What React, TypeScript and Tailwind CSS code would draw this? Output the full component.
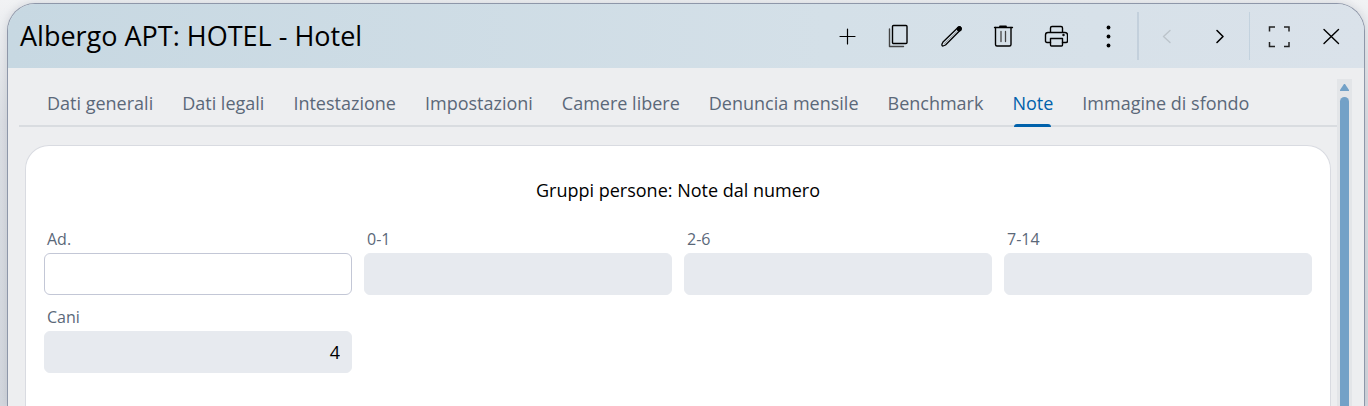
import { useState } from "react";
import type { ReactNode } from "react";

const tabs = [
  "Dati generali",
  "Dati legali",
  "Intestazione",
  "Impostazioni",
  "Camere libere",
  "Denuncia mensile",
  "Benchmark",
  "Note",
  "Immagine di sfondo",
];

const fields = [
  { id: "adults", label: "Ad.", value: "", enabled: true },
  { id: "age-0-1", label: "0-1", value: "", enabled: false },
  { id: "age-2-6", label: "2-6", value: "", enabled: false },
  { id: "age-7-14", label: "7-14", value: "", enabled: false },
  { id: "dogs", label: "Cani", value: "4", enabled: false },
];

type IconButtonProps = {
  label: string;
  disabled?: boolean;
  children: ReactNode;
};

const IconButton = ({ label, disabled, children }: IconButtonProps) => (
  <button
    aria-label={label}
    disabled={disabled}
    className="flex h-10 w-6 shrink-0 items-center justify-center text-black disabled:text-[#bcc4cb]"
  >
    <svg
      width="24"
      height="24"
      viewBox="0 0 24 24"
      fill="none"
      stroke="currentColor"
      strokeWidth="1.4"
      strokeLinecap="round"
      strokeLinejoin="round"
      className="shrink-0"
    >
      {children}
    </svg>
  </button>
);

const Toolbar = () => (
  <div className="flex items-center">
    <div className="flex gap-7 pr-[17px]">
      <IconButton label="Nuovo">
        <path d="M11.5 5v15M4 12.5h15" strokeWidth="1.2" />
      </IconButton>
      <IconButton label="Duplica">
        <rect x="4.5" y="1.5" width="14.5" height="18" rx="1" />
        <path d="M1.5 5v17.5h14" stroke="#444" />
      </IconButton>
      <IconButton label="Modifica">
        <path
          d="M2 20 3 18 18 3.5q1.500-1.300 2.600-.2t-.2 2.700L5.500 21 3 22Q1.500 22 2 20Z"
          strokeWidth="1.3"
        />
        <path d="M4.500 19.500 18 6.500" stroke="#777" strokeWidth=".7" />
        <circle cx="19.300" cy="4.800" r="1.900" fill="currentColor" />
      </IconButton>
      <IconButton label="Elimina">
        <path d="M3.500 3.500v17q0 1.500 1.500 1.500h12.500q1.500 0 1.500-1.500v-17" />
        <path d="M2.500 3.500h18" strokeWidth="1.300" />
        <path d="M8 2.500h6" strokeWidth="1.800" />
        <path d="M9 7.500v10M13.500 7.500v10" stroke="#444" strokeWidth="1.300" />
      </IconButton>
      <IconButton label="Stampa">
        <path d="M6.500 8V4q0-1.500 1.500-1.500h9Q18.500 2.500 18.500 4v4" />
        <path d="M6.500 18.500H3q-1.500 0-1.500-1.500v-6Q1.500 8.500 4 8.500h17q2.500 0 2.500 2.500v6q0 1.500-1.500 1.500h-3.500" />
        <path d="M6.500 14.500h12V21q0 1-1 1h-10q-1 0-1-1Z" />
        <circle cx="19.500" cy="11" r=".5" />
      </IconButton>
      <IconButton label="Altro">
        <g fill="currentColor" stroke="none">
          <circle cx="12.500" cy="3.500" r="1.900" />
          <circle cx="12.500" cy="12.500" r="1.900" />
          <circle cx="12.500" cy="21.500" r="1.900" />
        </g>
      </IconButton>
    </div>
    <div className="flex gap-7 border-l-2 border-[#c3d0dc] px-[17px] py-1">
      <IconButton label="Precedente" disabled>
        <path d="m14 6.500-6.500 6 6.500 6" />
      </IconButton>
      <IconButton label="Successivo">
        <path d="m9 6.500 6 6-6 6" strokeWidth="1.600" />
      </IconButton>
    </div>
    <div className="flex gap-7 border-l border-[#c3d2de] py-1 pl-[17px]">
      <IconButton label="Schermo intero">
        <path
          d="M2.500 7.500V3H8M17 3h5v4.500M22 18v4.500h-5M8 22.500H2.500V18"
          stroke="#222"
          strokeWidth="1.500"
          strokeLinecap="butt"
          strokeLinejoin="miter"
        />
      </IconButton>
      <IconButton label="Chiudi">
        <path d="m5 5.500 14.500 14M19.500 5.500 5 19.500" />
      </IconButton>
    </div>
  </div>
);

const Scrollbar = () => (
  <div className="mr-3 flex w-[15px] shrink-0 flex-col items-center bg-[#e3e5e8] pt-[5px]">
    <button aria-label="Scorri in alto" className="h-2 w-[9px] text-[#73a1c7]">
      <svg width="9" height="8" viewBox="0 0 9 8" fill="currentColor">
        <path d="M4 0h1L9 6V7H0V6Z" />
      </svg>
    </button>
    <div className="mt-[5px] w-[9px] flex-1 rounded-t-full bg-[#73a1c7]"></div>
  </div>
);

const App = () => {
  const [active, setActive] = useState("Note");

  return (
    <div className="flex min-h-screen flex-col overflow-hidden bg-linear-to-b from-[#f1f2f4] via-[#dcdfe4] via-30% to-[#d3d7de] pt-[3px] pr-[3px] pl-[7px] font-['Open_Sans',sans-serif]">
      <div className="flex flex-1 flex-col overflow-hidden rounded-t-[28px] border border-b-0 border-[#8e97a9] bg-[#edeef0] shadow-[0_0_8px_#9ca3af66]">
        <header className="flex h-16 shrink-0 items-center justify-between bg-linear-to-r from-[#c7d8e2] via-[#d4e0e8] via-60% to-[#dae2ea] pr-[21px] pl-3">
          <h1 className="text-[27px] whitespace-nowrap text-black">
            Albergo APT: HOTEL - Hotel
          </h1>
          <Toolbar />
        </header>

        <div className="flex flex-1 pt-[11px]">
          <main className="flex min-w-0 flex-1 flex-col pl-[11px]">
            <nav
              role="tablist"
              className="flex h-12 items-stretch gap-[29px] border-b-2 border-[#d9dce0] pl-7"
            >
              {tabs.map((tab) => (
                <button
                  key={tab}
                  role="tab"
                  aria-selected={active === tab}
                  onClick={() => setActive(tab)}
                  className={`relative pt-0.5 text-lg font-medium whitespace-nowrap ${
                    active === tab ? "text-[#0061ab]" : "text-[#5b6879]"
                  }`}
                >
                  {tab}
                  {active === tab && (
                    <span className="absolute inset-x-0.5 -bottom-0.5 h-[3px] rounded-t-sm bg-[#0061ab]"></span>
                  )}
                </button>
              ))}
            </nav>

            <section className="mt-[18px] mr-1.5 ml-1.5 flex-1 rounded-t-3xl border border-b-0 border-[#d9dbe1] bg-white px-[18px] pt-[30px]">
              <h2 className="text-center text-lg text-black">
                Gruppi persone: Note dal numero
              </h2>
              <div className="mt-[23px] grid grid-cols-4 gap-x-3 gap-y-2.5">
                {fields.map((field) => (
                  <div key={field.id} className="flex flex-col">
                    <label
                      htmlFor={field.id}
                      className="pb-0.5 pl-[3px] text-base font-medium text-[#5b6879]"
                    >
                      {field.label}
                    </label>
                    <input
                      id={field.id}
                      defaultValue={field.value}
                      disabled={!field.enabled}
                      className="h-[42px] w-full rounded-md border border-[#c3c7d6] bg-white px-[11px] text-right text-lg text-black disabled:border-[#e7eaef] disabled:bg-[#e7eaef]"
                    />
                  </div>
                ))}
              </div>
            </section>
          </main>
          <Scrollbar />
        </div>
      </div>
    </div>
  );
};

export default App;
